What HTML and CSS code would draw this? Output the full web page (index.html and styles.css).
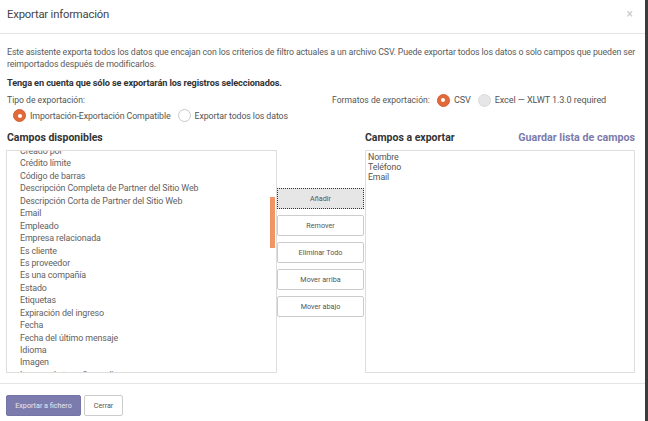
FILE: index.html
```html
<!DOCTYPE html>
<html lang="es">
<head>
<meta charset="utf-8">
<title>Exportar información</title>
<link rel="stylesheet" href="styles.css">
</head>
<body>
<div class="modal">
  <div class="modal-header">
    <span class="modal-title">Exportar información</span>
    <span class="close">×</span>
  </div>
  <div class="modal-body">
    <p class="intro"><span class="line">Este asistente exporta todos los datos que encajan con los criterios de filtro actuales a un archivo CSV. Puede exportar todos los datos o solo campos que pueden ser</span><br>reimportados después de modificarlos.</p>
    <p class="note">Tenga en cuenta que sólo se exportarán los registros seleccionados.</p>
    <div class="options">
      <div class="opt-type">
        <div class="label">Tipo de exportación:</div>
        <div class="radios">
          <span class="radio checked"></span><span class="rlabel wide">Importación-Exportación Compatible</span>
          <span class="radio"></span><span class="rlabel">Exportar todos los datos</span>
        </div>
      </div>
      <div class="opt-format">
        <span class="label">Formatos de exportación:</span>
        <span class="radio checked"></span><span class="rlabel fmt">CSV</span>
        <span class="radio disabled"></span><span class="rlabel fmt">Excel — XLWT 1.3.0 required</span>
      </div>
    </div>
    <div class="fields">
      <div class="col-left">
        <div class="col-title">Campos disponibles</div>
        <div class="listbox">
          <div class="list-inner">
            <div class="item">Creado por</div>
            <div class="item">Crédito límite</div>
            <div class="item">Código de barras</div>
            <div class="item">Descripción Completa de Partner del Sitio Web</div>
            <div class="item">Descripción Corta de Partner del Sitio Web</div>
            <div class="item">Email</div>
            <div class="item">Empleado</div>
            <div class="item">Empresa relacionada</div>
            <div class="item">Es cliente</div>
            <div class="item">Es proveedor</div>
            <div class="item">Es una compañía</div>
            <div class="item">Estado</div>
            <div class="item">Etiquetas</div>
            <div class="item">Expiración del ingreso</div>
            <div class="item">Fecha</div>
            <div class="item">Fecha del último mensaje</div>
            <div class="item">Idioma</div>
            <div class="item">Imagen</div>
            <div class="item">Imagen de tamaño medio</div>
          </div>
          <div class="thumb"></div>
        </div>
      </div>
      <div class="col-mid">
        <button class="btn focus">Añadir</button>
        <button class="btn">Remover</button>
        <button class="btn">Eliminar Todo</button>
        <button class="btn">Mover arriba</button>
        <button class="btn">Mover abajo</button>
      </div>
      <div class="col-right">
        <div class="col-head">
          <span class="col-title">Campos a exportar</span>
          <span class="save-link">Guardar lista de campos</span>
        </div>
        <div class="listbox right">
          <div class="ritem">Nombre</div>
          <div class="ritem">Teléfono</div>
          <div class="ritem">Email</div>
        </div>
      </div>
    </div>
  </div>
  <div class="modal-footer">
    <button class="btn-primary">Exportar a fichero</button>
    <button class="btn-default">Cerrar</button>
  </div>
</div>
</body>
</html>
```
FILE: styles.css
```css
* { box-sizing: border-box; }
html, body { margin: 0; padding: 0; }
body {
  background: #3c3c3c;
  font-family: Roboto, "Liberation Sans", sans-serif;
  width: 648px;
  height: 421px;
  overflow: hidden;
}
.modal {
  width: 645px;
  height: 421px;
  background: #fff;
  display: flex;
  flex-direction: column;
}
.modal-header {
  height: 34px;
  border-bottom: 1px solid #e5e5e5;
  display: flex;
  align-items: center;
  justify-content: space-between;
  padding: 0 12px 5px 7px;
}
.modal-title {
  font-size: 11.3px;
  color: #444;
  letter-spacing: -0.2px;
}
.close {
  font-size: 12px;
  color: #c8c8c8;
}
.modal-body {
  padding: 12px 10px 0 6px;
  height: 349px;
}
.intro {
  margin: 0 0 0 1px;
  font-size: 8.8px;
  line-height: 12px;
  color: #5a5a5a;
  letter-spacing: -0.12px;
}
.intro .line { white-space: nowrap; }
.note {
  margin: 7px 0 0 1px;
  font-size: 9.2px;
  line-height: 12px;
  font-weight: bold;
  color: #333;
  letter-spacing: -0.12px;
}
.options {
  display: flex;
  margin-top: 5px;
  height: 32px;
}
.opt-type { width: 325px; }
.label {
  font-size: 8.6px;
  color: #555;
  line-height: 12px;
  padding-left: 1px;
}
.radios {
  display: flex;
  align-items: center;
  margin-top: 3px;
  padding-left: 7px;
}
.radio {
  width: 13px;
  height: 13px;
  border-radius: 50%;
  border: 1px solid #c8c8c8;
  background: #fff;
  display: inline-block;
  position: relative;
  flex: none;
}
.radio.checked {
  background: #e2693a;
  border-color: #d55f30;
}
.radio.checked::after {
  content: "";
  position: absolute;
  left: 3.5px;
  top: 3.5px;
  width: 4px;
  height: 4px;
  border-radius: 50%;
  background: #fff;
}
.radio.disabled {
  background: #e6e6e6;
  border-color: #dadada;
}
.rlabel {
  font-size: 8.8px;
  color: #555;
  margin: 0 6px 0 4px;
  letter-spacing: -0.1px;
}
.rlabel.wide { margin-right: 7px; }
.rlabel.fmt { font-size: 9.1px; margin-right: 7px; }
.opt-format {
  display: flex;
  align-items: center;
  height: 12px;
}
.opt-format .label { margin-right: 7px; }
.fields {
  display: flex;
  margin-top: 5px;
}
.col-left { width: 271px; }
.col-title {
  font-size: 10.5px;
  font-weight: bold;
  color: #333;
  line-height: 14px;
  padding-left: 1px;
  display: block;
}
.listbox {
  margin-top: 5px;
  height: 223px;
  border: 1px solid #dedede;
  overflow: hidden;
  position: relative;
}
.list-inner {
  margin-top: -6px;
  padding-left: 13px;
}
.item {
  font-size: 8.9px;
  line-height: 12.44px;
  color: #626262;
  letter-spacing: -0.12px;
  white-space: nowrap;
}
.thumb {
  position: absolute;
  right: 1px;
  top: 46px;
  width: 5px;
  height: 51px;
  background: #f19466;
}
.col-mid {
  width: 88px;
  display: flex;
  flex-direction: column;
  gap: 6px;
  padding-top: 57px;
}
.btn {
  width: 87px;
  height: 21px;
  border: 1px solid #ccc;
  border-radius: 2px;
  background: #fff;
  font-family: Roboto, "Liberation Sans", sans-serif;
  font-size: 7.2px;
  color: #555;
  padding: 0;
}
.btn.focus {
  background: #e6e6e6;
  border: 1px dotted #333;
  border-radius: 0;
}
.col-right { width: 270px; }
.col-head {
  display: flex;
  justify-content: space-between;
  align-items: baseline;
}
.col-right .col-title { padding-left: 0; }
.save-link {
  font-size: 10.7px;
  font-weight: bold;
  color: #7c7bad;
  line-height: 14px;
  letter-spacing: 0;
}
.listbox.right {
  padding: 1px 0 0 2px;
}
.ritem {
  font-size: 8.8px;
  line-height: 10px;
  color: #555;
  letter-spacing: -0.15px;
}
.modal-footer {
  border-top: 1px solid #e5e5e5;
  display: flex;
  gap: 3px;
  padding: 11px 6px 0 6px;
  height: 38px;
}
.btn-primary {
  width: 75px;
  height: 21px;
  background: #7c7bad;
  border: 1px solid #7574a6;
  border-radius: 2px;
  color: #e8e8f2;
  font-family: Roboto, "Liberation Sans", sans-serif;
  font-size: 7.2px;
  padding: 0;
}
.btn-default {
  width: 39px;
  height: 21px;
  background: #fff;
  border: 1px solid #ccc;
  border-radius: 2px;
  color: #555;
  font-family: Roboto, "Liberation Sans", sans-serif;
  font-size: 7.2px;
  padding: 0;
}
```
